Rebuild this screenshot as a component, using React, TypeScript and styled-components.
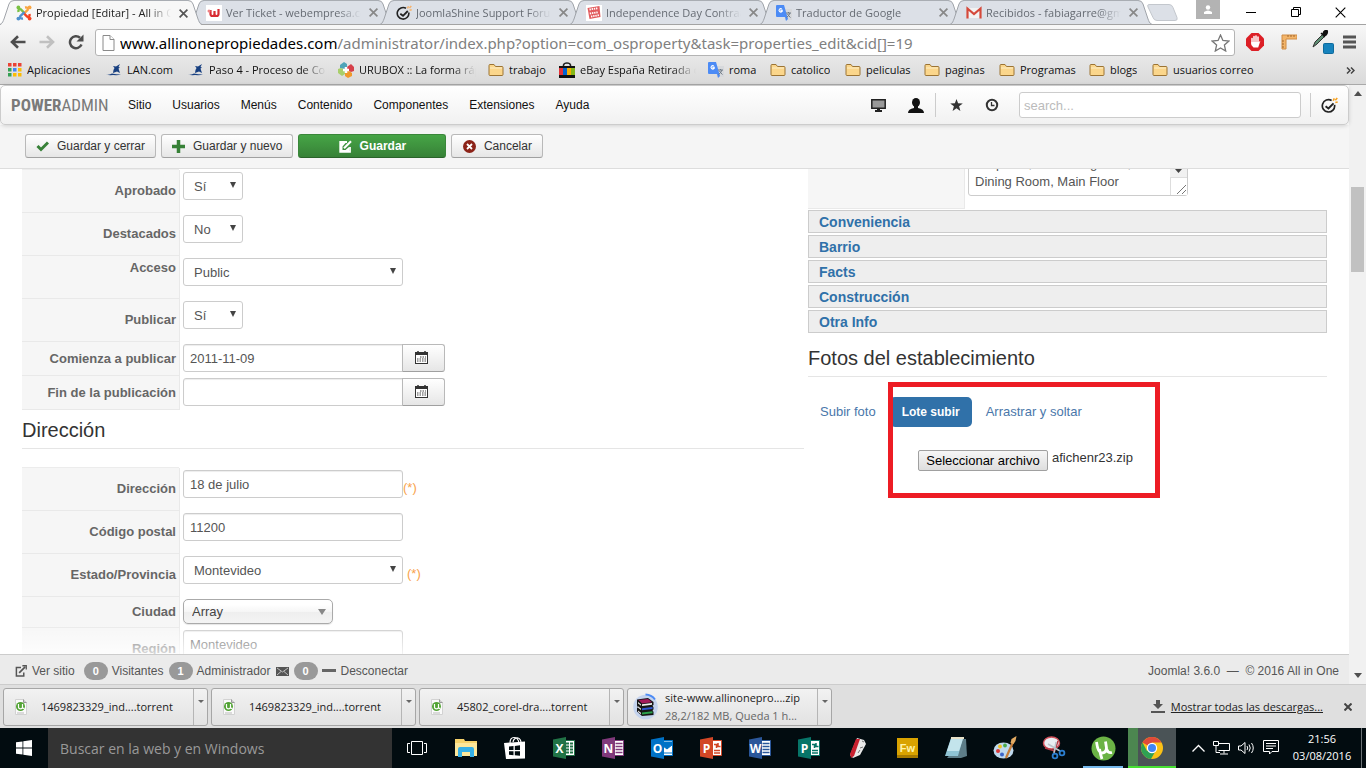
import React from "react";
import styled, { createGlobalStyle, css } from "styled-components";

const uiFont = `"Open Sans", "Noto Sans", sans-serif`;
const pageFont = `"Liberation Sans", Arial, sans-serif`;

const GlobalStyle = createGlobalStyle`
  *, *::before, *::after { box-sizing: border-box; }
  body { margin: 0; font-family: ${pageFont}; font-size: 13px; color: #333; background: #fff; }
  button, input, select, textarea { font-family: inherit; margin: 0; }
  svg { display: block; flex: none; }
`;

const Desktop = styled.div`
  display: flex;
  flex-direction: column;
  height: 100vh;
  min-height: 480px;
  overflow: hidden;
`;

/* ---------- Browser chrome ---------- */

const TabStrip = styled.header`
  flex: none;
  display: flex;
  height: 25px;
  background: linear-gradient(#fff 24px, #a3a3a3 24px);
  font: 11px/24px ${uiFont};
`;

const Tab = styled.div<{ $active?: boolean }>`
  position: relative;
  z-index: ${(p) => (p.$active ? 2 : 1)};
  display: flex;
  flex: 0 1 202px;
  min-width: 0;
  height: 25px;
  color: ${(p) => (p.$active ? "#222" : "#666b73")};
  & + & { margin-left: -12px; }
`;

const TabBody = styled.div<{ $active?: boolean }>`
  display: flex;
  flex: 1;
  align-items: center;
  min-width: 0;
  height: ${(p) => (p.$active ? 25 : 24)}px;
  padding-left: 2px;
  border-top: 1px solid #a9adb3;
  background: ${(p) => (p.$active ? "#f7f7f7" : "#dce0e7")};
`;

const TabTitle = styled.span`
  flex: 1;
  min-width: 0;
  margin-left: 4px;
  overflow: hidden;
  white-space: nowrap;
  mask-image: linear-gradient(90deg, #000 calc(100% - 24px), transparent);
`;

const PlainButton = styled.button`
  display: flex;
  align-items: center;
  justify-content: center;
  padding: 0;
  border: 0;
  background: none;
  color: inherit;
`;

const TabClose = styled(PlainButton)`
  width: 16px;
  height: 16px;
  margin: 0 -3px 0 4px;
`;

const NewTab = styled(PlainButton)`
  align-self: flex-start;
  margin: 4px 0 0 -6px;
`;

const WindowControls = styled.div`
  display: flex;
  margin-left: auto;
  height: 24px;
  padding-right: 3px;
`;

const Profile = styled(PlainButton)`
  width: 24px;
  height: 19px;
  margin-right: 8px;
  background: #b3b3b3;
`;

const WindowButton = styled(PlainButton)`
  width: 45px;
  height: 24px;
  color: #000;
`;

const Toolbars = styled.div`
  flex: none;
  height: 60px;
  border-bottom: 1px solid #a9a9a9;
  background: linear-gradient(#f7f7f7, #dadada);
`;

const NavRow = styled.div`
  display: flex;
  align-items: center;
  height: 33px;
  padding: 0 10px 0 8px;
`;

const NavButton = styled(PlainButton)`
  width: 20px;
  height: 24px;
  margin-right: 9px;
`;

const Omnibox = styled.div`
  display: flex;
  flex: 1;
  align-items: center;
  min-width: 0;
  height: 27px;
  margin: 2px 6px 0 0;
  padding: 0 4px 0 6px;
  border: 1px solid #b4b4b4;
  border-radius: 3px;
  background: #fff;
`;

const Url = styled.div`
  flex: 1;
  min-width: 0;
  margin-left: 5px;
  overflow: hidden;
  white-space: nowrap;
  font: 15px/24px "Noto Sans", sans-serif;
  color: #808080;
  b { font-weight: 400; color: #000; }
`;

const ExtensionButton = styled(PlainButton)`
  width: 28px;
  height: 28px;
  margin-right: 6px;
`;

const BookmarkRow = styled.nav`
  display: flex;
  align-items: center;
  height: 24px;
  padding: 0 11px 0 8px;
  font: 11px/20px ${uiFont};
`;

const Bookmark = styled.a<{ $width: number; $fade?: boolean }>`
  display: flex;
  align-items: center;
  gap: 5px;
  flex: 0 1 ${(p) => p.$width}px;
  min-width: 0;
  padding-right: 12px;
  color: #111;
  text-decoration: none;
  white-space: nowrap;
  overflow: hidden;
  span {
    overflow: hidden;
    ${(p) => p.$fade && css`mask-image: linear-gradient(90deg, #000 calc(100% - 24px), transparent);`}
  }
`;

const More = styled(PlainButton)`
  margin-left: auto;
  color: #444;
`;

/* ---------- Page ---------- */

const Viewport = styled.div`
  display: flex;
  flex: 1;
  min-height: 0;
`;

const Page = styled.div`
  position: relative;
  display: flex;
  flex: 1;
  flex-direction: column;
  min-width: 0;
  background: #fff;
`;

const AdminBar = styled.div`
  position: relative;
  flex: none;
  display: flex;
  align-items: center;
  height: 40px;
  padding: 0 10px;
  border: 1px solid #ccc;
  border-radius: 5px;
  background: linear-gradient(#fff, #f1f1f1);
  box-shadow: 0 1px 4px rgba(0, 0, 0, 0.15);
  z-index: 1;
`;

const Brand = styled.a`
  width: 107px;
  color: #7a7a7a;
  text-decoration: none;
  font: 17px/24px "Liberation Sans Narrow", "Roboto Condensed", ${pageFont};
`;

const AdminMenu = styled.nav`
  display: flex;
  gap: 1px;
  a {
    padding: 0 10px;
    color: #111;
    font-size: 12px;
    line-height: 24px;
    text-decoration: none;
  }
`;

const AdminTools = styled.div`
  display: flex;
  align-items: center;
  gap: 22px;
  margin-left: auto;
`;

const Divider = styled.span<{ $tight?: boolean }>`
  width: 1px;
  height: 24px;
  margin: ${(p) => (p.$tight ? "0 -8px 0 -11px" : "0 -12px 0 0")};
  background: #ccc;
`;

const AdminSearch = styled.input`
  width: 282px;
  height: 26px;
  margin: 0 -13px 0 -2px;
  padding: 2px 4px;
  border: 1px solid #ccc;
  border-radius: 3px;
  background: #fff;
  font-size: 13px;
  &::placeholder { color: #bbb; opacity: 1; }
`;

const ActionBar = styled.div`
  flex: none;
  display: flex;
  gap: 5px;
  height: 44px;
  padding: 9px 25px 0;
  border-bottom: 1px solid #ddd;
  background: #f5f5f5;
`;

const ActionButton = styled.button<{ $primary?: boolean }>`
  display: flex;
  align-items: center;
  justify-content: center;
  gap: 8px;
  min-width: ${(p) => (p.$primary ? 148 : 92)}px;
  height: 24px;
  padding: 0 10px;
  border: 1px solid #b9b9b9;
  border-bottom-color: #a0a0a0;
  border-radius: 3px;
  background: linear-gradient(#fff, #e6e6e6);
  color: #333;
  font-size: 12px;
  line-height: 18px;
  ${(p) =>
    p.$primary &&
    css`
      border-color: #3a873a #3a873a #2a632a;
      background: linear-gradient(#46a546, #378137);
      color: #fff;
      font-weight: 700;
    `}
`;

const Scroller = styled.main`
  flex: 1;
  min-height: 0;
  overflow: hidden;
`;

/* The form is shown part-way down its scroll range. */
const Form = styled.form`
  display: grid;
  grid-template-columns: 782fr 519fr;
  gap: 4px;
  margin-top: -20px;
  padding: 0 22px;
`;

const MainColumn = styled.div`
  padding-top: 20px;
`;

const SideColumn = styled.div`
  min-width: 0;
`;

const FieldTable = styled.div`
  border-top: 1px solid transparent;
  border-image: linear-gradient(90deg, #ececec 158px, transparent 158px) 1;
  border-width: 1px 0 0;
`;

const FieldRow = styled.div<{ $height: number }>`
  display: grid;
  grid-template-columns: 158px 1fr;
  column-gap: 3px;
  height: ${(p) => p.$height}px;
`;

const FieldLabel = styled.label<{ $top?: boolean }>`
  display: flex;
  align-items: ${(p) => (p.$top ? "flex-start" : "center")};
  justify-content: flex-end;
  padding: ${(p) => (p.$top ? "3px" : "0")} 3px 0 0;
  border: solid #e9e9e9;
  border-width: 0 1px 1px 0;
  background: #f6f6f6;
  color: #666;
  font-weight: 700;
  line-height: 18px;
  white-space: nowrap;
`;

const FieldControl = styled.div`
  display: flex;
  align-items: flex-start;
  padding-top: 2px;
`;

const controlBox = css`
  height: 28px;
  border: 1px solid #ccc;
  border-radius: 3px;
  background: #fff;
  color: #555;
  font-size: 13px;
`;

const TextInput = styled.input<{ $joined?: boolean }>`
  ${controlBox}
  width: 220px;
  padding: 4px 6px;
  box-shadow: inset 0 1px 1px rgba(0, 0, 0, 0.075);
  ${(p) => p.$joined && css`border-radius: 3px 0 0 3px;`}
`;

const CalendarButton = styled.button`
  display: flex;
  align-items: center;
  justify-content: center;
  width: 43px;
  height: 28px;
  margin-left: -1px;
  padding: 0 5px 2px 0;
  border: 1px solid #b9b9b9;
  border-bottom-color: #a0a0a0;
  border-radius: 0 3px 3px 0;
  background: linear-gradient(#fff, #e6e6e6);
`;

const SelectWrap = styled.span<{ $width: number }>`
  position: relative;
  width: ${(p) => p.$width}px;
  svg {
    position: absolute;
    right: 7px;
    top: 10px;
    pointer-events: none;
  }
`;

const Select = styled.select`
  ${controlBox}
  appearance: none;
  width: 100%;
  padding: 0 20px 0 10px;
`;

const CitySelect = styled.select`
  appearance: none;
  width: 100%;
  height: 25px;
  padding: 0 24px 0 8px;
  border: 1px solid #aaa;
  border-radius: 5px;
  background: linear-gradient(#fff 20%, #f6f6f6 50%, #eee 52%, #f4f4f4);
  box-shadow: 0 1px 1px rgba(0, 0, 0, 0.1);
  color: #444;
  font-size: 13px;
`;

const Required = styled.span<{ $gap?: boolean }>`
  margin-left: ${(p) => (p.$gap ? 4 : 0)}px;
  color: #f9a24a;
  line-height: 36px;
`;

const SectionTitle = styled.h2`
  margin: 0;
  padding-top: 8px;
  height: 39px;
  border-bottom: 1px solid #e5e5e5;
  color: #333;
  font-size: 20px;
  font-weight: 400;
  line-height: 24px;
`;

const AddressFields = styled.div`
  margin-top: 18px;
`;

const OptionsRow = styled.div`
  display: grid;
  grid-template-columns: 157px 1fr;
  column-gap: 3px;
  height: 60px;
`;

const OptionsLabel = styled.div`
  border: solid #e9e9e9;
  border-width: 0 1px 1px 0;
  background: #f6f6f6;
`;

const TextAreaWrap = styled.div`
  position: relative;
  width: 220px;
  height: 46px;
  margin-top: 1px;
`;

const TextArea = styled.textarea`
  display: block;
  width: 100%;
  height: 100%;
  padding: 4px 20px 0 6px;
  border: 1px solid #ccc;
  border-radius: 3px;
  color: #555;
  font-size: 13px;
  line-height: 18px;
  resize: none;
  overflow: hidden;
`;

const TextAreaScroll = styled.span`
  position: absolute;
  right: 1px;
  top: 1px;
  bottom: 1px;
  display: flex;
  flex-direction: column;
  width: 17px;
  background: #f1f1f1;
  > svg { margin: 18px 0 4px 5px; }
`;

const ResizeCorner = styled.span`
  display: flex;
  flex: 1;
  align-items: flex-end;
  justify-content: flex-end;
  padding: 1px;
  border: solid #ddd;
  border-width: 1px 0 0 1px;
  background: #fff;
`;

const Accordion = styled.div`
  display: flex;
  flex-direction: column;
  gap: 2px;
  padding: 1px 0 5px;
`;

const AccordionHeader = styled.button`
  height: 23px;
  padding: 0 10px;
  border: 1px solid #ccc;
  background: #eee;
  color: #3071a9;
  font-size: 14px;
  font-weight: 700;
  line-height: 20px;
  text-align: left;
`;

const PhotoPanel = styled.div`
  position: relative;
  padding-top: 20px;
`;

const Pills = styled.div`
  display: flex;
  gap: 2px;
`;

const Pill = styled.a<{ $active?: boolean }>`
  padding: 6px 12px;
  border-radius: 5px;
  background: ${(p) => (p.$active ? "#3071a9" : "transparent")};
  color: ${(p) => (p.$active ? "#fff" : "#4a77aa")};
  font-size: ${(p) => (p.$active ? 12 : 13)}px;
  font-weight: ${(p) => (p.$active ? 700 : 400)};
  line-height: 18px;
  text-decoration: none;
`;

const FileRow = styled.div`
  display: flex;
  gap: 4px;
  padding: 23px 0 0 110px;
  line-height: 16px;
`;

const HiddenFile = styled.input`
  position: absolute;
  width: 1px;
  height: 1px;
  opacity: 0;
`;

const FileButton = styled.label`
  width: 130px;
  height: 21px;
  border: 1px solid #a0a0a0;
  border-radius: 2px;
  background: linear-gradient(#f6f6f6, #dedede);
  color: #000;
  line-height: 19px;
  text-align: center;
  white-space: nowrap;
`;

const Highlight = styled.div`
  position: absolute;
  left: 80px;
  top: 5px;
  width: 272px;
  height: 116px;
  border: 5px solid #ed1c24;
  pointer-events: none;
`;

const StatusBar = styled.footer`
  position: relative;
  flex: none;
  display: flex;
  align-items: center;
  height: 30px;
  padding: 3px 10px 0 15px;
  border-top: 1px solid #ccc;
  background: #ebebeb;
  color: #555;
  font-size: 12px;
  white-space: nowrap;
  &::before {
    content: "";
    position: absolute;
    left: 0;
    right: 0;
    bottom: 100%;
    height: 30px;
    margin-bottom: 1px;
    background: linear-gradient(rgba(255, 255, 255, 0), rgba(255, 255, 255, 0.75));
    pointer-events: none;
  }
  a {
    display: flex;
    align-items: center;
    gap: 5px;
    color: inherit;
    text-decoration: none;
  }
`;

const Badge = styled.span`
  width: 24px;
  height: 18px;
  margin: 0 4px 0 5px;
  border-radius: 9px;
  background: #999;
  color: #fff;
  font-size: 11px;
  font-weight: 700;
  line-height: 18px;
  text-align: center;
`;

const Visitors = styled.span`
  display: flex;
  align-items: center;
  margin-left: 4px;
`;

const Copyright = styled.p`
  margin: 0 0 0 auto;
  white-space: pre;
`;

const ScrollTrack = styled.div`
  flex: none;
  display: flex;
  flex-direction: column;
  align-items: center;
  width: 17px;
  padding: 6px 0;
  background: #f1f1f1;
`;

const ScrollThumb = styled.div`
  flex: 85;
  width: 13px;
  background: #c1c1c1;
`;

const ScrollSpace = styled.div<{ $grow: number }>`
  flex: ${(p) => p.$grow};
`;

/* ---------- Downloads ---------- */

const Downloads = styled.section`
  flex: none;
  display: flex;
  align-items: center;
  gap: 3px;
  height: 44px;
  padding: 0 10px 0 3px;
  border-top: 1px solid #ccc;
  background: #dfdfdf;
  color: #222;
  font: 11px/18px ${uiFont};
`;

const DownloadItem = styled.div`
  display: flex;
  flex: 0 1 205px;
  min-width: 0;
  height: 38px;
  border: 1px solid #a6a6a6;
  border-radius: 3px;
  background: linear-gradient(#f2f2f2, #e2e2e2);
`;

const DownloadOpen = styled(PlainButton)<{ $progress?: boolean }>`
  flex: 1;
  justify-content: flex-start;
  min-width: 0;
  gap: ${(p) => (p.$progress ? 7 : 12)}px;
  padding-left: ${(p) => (p.$progress ? 5 : 9)}px;
  overflow: hidden;
  text-align: left;
  white-space: nowrap;
  font: inherit;
  small { display: block; color: #666; font-size: 11px; }
`;

const DownloadMenu = styled(PlainButton)`
  width: 14px;
  padding-bottom: 10px;
  border-left: 1px solid #b5b5b5;
`;

const ShowAll = styled.a`
  display: flex;
  align-items: center;
  gap: 6px;
  margin-left: auto;
  color: #222;
  white-space: nowrap;
`;

const CloseBar = styled(PlainButton)`
  width: 16px;
  margin-left: 14px;
`;

/* ---------- Taskbar ---------- */

const Taskbar = styled.footer`
  flex: none;
  display: flex;
  height: 40px;
  background: #020c10;
  color: #fff;
  font-family: ${uiFont};
`;

const StartButton = styled(PlainButton)`
  flex: none;
  width: 48px;
`;

const TaskSearch = styled.input`
  flex: 0 1 344px;
  min-width: 80px;
  padding: 0 12px;
  border: 0;
  background: #333;
  font-size: 14px;
  &::placeholder { color: #999; opacity: 1; }
`;

const TaskButton = styled(PlainButton)<{ $state?: "open" | "active" }>`
  position: relative;
  flex: 0 1 48px;
  margin-left: 1px;
  ${(p) =>
    p.$state === "active" &&
    css`background: linear-gradient(90deg, #4c8650 10px, #4a5356 10px);`}
  ${(p) =>
    p.$state &&
    css`
      &::after {
        content: "";
        position: absolute;
        left: ${p.$state === "active" ? 0 : 4}px;
        right: ${p.$state === "active" ? 0 : 4}px;
        bottom: 0;
        height: 2px;
        background: ${p.$state === "active" ? "#46e032" : "#76b9ed"};
      }
    `}
`;

const Tray = styled.div`
  display: flex;
  align-items: center;
  gap: 8px;
  margin-left: auto;
`;

const Clock = styled.time`
  width: 62px;
  margin-left: 4px;
  padding-bottom: 2px;
  font-size: 11px;
  line-height: 17px;
  text-align: center;
  white-space: nowrap;
`;

const ShowDesktop = styled.button`
  width: 5px;
  height: 40px;
  padding: 0;
  border: 0;
  border-left: 1px solid #6b7275;
  background: none;
`;

/* ---------- Drawings ---------- */

const Cross = ({ size = 8, color = "#777", width = 2 }: { size?: number; color?: string; width?: number }) => (
  <svg width={size} height={size} viewBox="0 0 8 8" stroke={color} strokeWidth={width}>
    <path d="M.5.5l7 7M7.5.5l-7 7" />
  </svg>
);

const Triangle = ({ w = 6, h = 6, color = "#444", up }: { w?: number; h?: number; color?: string; up?: boolean }) => (
  <svg width={w} height={h} viewBox="0 0 10 10" preserveAspectRatio="none" fill={color}>
    <path d={up ? "M0 10L5 0l5 10z" : "M0 0h10L5 10z"} />
  </svg>
);

const TabEdge = ({ side, active }: { side: "left" | "right"; active?: boolean }) => (
  <svg width="14" height="25" viewBox="0 0 14 25" transform={side === "right" ? "scale(-1 1)" : undefined}>
    <path
      d={active ? "M0 25C3 24 3 22 4 19L9 4Q10 .5 14 .5V25z" : "M0 24C3 23 3 21 4 19L9 4Q10 .5 14 .5V24z"}
      fill={active ? "#f7f7f7" : "#dce0e7"}
    />
    <path d="M0 24.500C3 23 3 21 4 19L9 4Q10 .5 14 .5" fill="none" stroke="#a0a4aa" />
  </svg>
);

const JoomlaIcon = () => (
  <svg width="16" height="16" viewBox="0 0 16 16" fill="none" strokeWidth="2.400">
    <path d="M2.500 7Q2 3.500 4.800 4.300L9 8.500" stroke="#7ac143" />
    <path d="M9 2.500Q12.500 2 11.700 4.800L7.500 9" stroke="#f9a541" />
    <path d="M13.500 9Q14 12.500 11.200 11.700L7 7.500" stroke="#f44321" />
    <path d="M7 13.500Q3.500 14 4.300 11.200L8.500 7" stroke="#5091cd" />
    <circle cx="2.400" cy="2.400" r="1.900" fill="#7ac143" /><circle cx="13.600" cy="2.400" r="1.900" fill="#f9a541" />
    <circle cx="13.600" cy="13.600" r="1.900" fill="#f44321" /><circle cx="2.400" cy="13.600" r="1.900" fill="#5091cd" />
  </svg>
);

const WebempresaIcon = () => (
  <svg width="16" height="16" viewBox="0 0 16 16">
    <rect width="16" height="16" fill="#fff" />
    <path d="M4.500 5v4Q4.500 11 6.500 11 8.500 11 8.500 9V6v3q0 2 2 2t2-2V4" fill="none" stroke="#d82c33" strokeWidth="2.200" />
    <circle cx="3" cy="6" r="1.500" fill="#ef7f82" />
  </svg>
);

const ShineIcon = ({ size = 16, spark = "#f7b26a" }: { size?: number; spark?: string }) => (
  <svg width={size} height={size} viewBox="0 0 16 16" fill="none" strokeWidth="1.600">
    <path d="M10 3.300A5.800 5.800 0 1 0 12.800 7.500" stroke="#222" />
    <path d="M4.300 8.800l2.700 2 4.800-4.800" stroke="#222" strokeWidth="1.800" />
    <path d="M11.500 3.500l1-2.200M13.500 5.200l2.200-.5M13.500 3l1.800-2" stroke={spark} strokeWidth="1.500" />
  </svg>
);

const StampIcon = () => (
  <svg width="16" height="16" viewBox="0 0 16 16">
    <rect width="16" height="16" fill="#fff" />
    <path d="M1.500 3l12-2 1 11-11 2z" fill="#e25b5e" />
    <path d="M3.500 4.500l8.500-1.300M3.800 8.500l8.500-1.300M5 11.500l8-1.300" stroke="#fff" strokeWidth="1.800" strokeDasharray="1.400 .8" />
  </svg>
);

const TranslateIcon = () => (
  <svg width="16" height="16" viewBox="0 0 16 16">
    <path d="M7 4h9v11H9z" fill="#d7d9dc" />
    <path d="M0 1q0-1 1-1h7l4 14-2 2-1-4H1q-1 0-1-1z" fill="#4c8bf5" />
    <path d="M7 5.300H5v1.200h1A1.700 1.700 0 1 1 5.800 4" fill="none" stroke="#fff" strokeWidth="1.100" />
    <path d="M10 8h5M12.500 7v1m1.500 0q-1 3-3.500 4.500M11.500 9q1 2 3 3.500" fill="none" stroke="#6f7a86" />
  </svg>
);

const GmailIcon = () => (
  <svg width="16" height="16" viewBox="0 0 16 16">
    <path d="M1 3h14v10H1z" fill="#f2f2f2" />
    <path d="M1.500 13.500v-10L8 9l6.500-5.500v10" fill="none" stroke="#d5493b" strokeWidth="2.200" />
  </svg>
);

const AppsIcon = () => (
  <svg width="14" height="14" viewBox="0 0 14 14">
    {["#ea4335", "#ea4335", "#ea4335", "#34a053", "#4285f4", "#fbbc05", "#34a053", "#fbbc05", "#fbbc05"].map((c, i) => (
      <rect key={i} x={(i % 3) * 5} y={Math.floor(i / 3) * 5} width="3.500" height="3.500" fill={c} />
    ))}
  </svg>
);

const LanIcon = () => (
  <svg width="16" height="16" viewBox="0 0 16 16" fill="#173f80">
    <path d="M7 4l3 .5L14 2l-1.500 3 1.500.5-1.500 1L14 11l-3-1.500-4 1.500.5-3 1-2zM0 12.500q4 .5 6-1 4 1 9 1-3 1-8 .500Q3 13.500 0 12.500z" />
  </svg>
);

const UruboxIcon = () => (
  <svg width="16" height="16" viewBox="0 0 16 16">
    <path d="M2 3l4-3 3 2v5H6L2 6z" fill="#4fa4b8" /><path d="M9 5l4-3 3 3v4l-3 1-4-2z" fill="#d6404a" />
    <path d="M7 9h4l3 2v3l-4 2-3-2z" fill="#f0992b" /><path d="M0 7l3-1 4 2v4l-3 2-4-3z" fill="#a9cf6b" />
    <path d="M8 5v6M5 8h6" stroke="#fff" strokeWidth="2.500" />
  </svg>
);

const FolderIcon = () => (
  <svg width="16" height="14" viewBox="0 0 16 14">
    <path d="M1 2.500q0-1 1-1h4l1.500 2H14q1 0 1 1v7q0 1-1 1H2q-1 0-1-1z" fill="#fbd68b" stroke="#9c7434" />
    <path d="M2 5h12" stroke="#fdeec7" />
  </svg>
);

const EbayIcon = () => (
  <svg width="16" height="16" viewBox="0 0 16 16">
    <path d="M4.500 5V3Q5 1 8 1t3.500 2v2" fill="none" stroke="#222" strokeWidth="1.500" />
    <path d="M0 4h16v12H0z" fill="#111" />
    <path d="M0 6h4v7H0z" fill="#e53238" /><path d="M4 6h4v7H4z" fill="#0064d2" />
    <path d="M8 6h4v7H8z" fill="#f5af02" /><path d="M12 6h4v7h-4z" fill="#86b817" />
  </svg>
);

const CalendarIcon = () => (
  <svg width="13" height="13" viewBox="0 0 13 13">
    <path d="M0 1h13v12H0z" fill="#333" /><path d="M1 4h11v8H1z" fill="#fff" />
    <path d="M5 6h6M2 8h9M2 10h9" stroke="#444" strokeWidth="1.200" strokeDasharray="1.500 1" />
    <path d="M3 0v2M10 0v2" stroke="#333" strokeWidth="1.500" />
  </svg>
);

const ShareIcon = ({ color = "#fff" }: { color?: string }) => (
  <svg width="12" height="12" viewBox="0 0 13 13" fill="none" stroke={color}>
    <path d="M6.500 2.800H1.500v9h8V8" strokeWidth="1.600" />
    <path d="M4.500 8.500L11 2" strokeWidth="1.800" /><path d="M8 .8h4.200V5" strokeWidth="1.400" />
  </svg>
);

const EditIcon = () => (
  <svg width="13" height="13" viewBox="0 0 13 13" fill="none" stroke="#fff">
    <path d="M8 2H1.200v9.800H11V7" strokeWidth="1.800" />
    <path d="M2 2.500h5L3.500 6.500v3.500h3L10 7v4H2z" fill="#fff" stroke="none" />
    <path d="M5 8.200L12 1.200" strokeWidth="2.200" />
  </svg>
);

const TorrentIcon = () => (
  <svg width="16" height="18" viewBox="0 0 16 18">
    <path d="M2.500 1.500h8l3 3v12h-11z" fill="#fafafa" stroke="#d2d2d2" />
    <path d="M10.500 1.500v3h3" fill="#ccc" stroke="#999" />
    <circle cx="7.500" cy="8.500" r="4.500" fill="#52a334" />
    <path d="M5.500 6v3q0 1.800 2 1.800t2-1.800V6M9.500 9.500q.5 1.300 2 .8" fill="none" stroke="#fff" strokeWidth="1.200" />
    <path d="M4 15h7" stroke="#bbb" />
  </svg>
);

const ZipIcon = () => (
  <svg width="25" height="28" viewBox="0 0 25 28">
    <circle cx="12.500" cy="14" r="12.300" fill="#c4d3ee" />
    <path d="M12.500 1.500a12 12 0 0 1 9.500 5" fill="none" stroke="#4c8bf5" strokeWidth="2" />
    <path d="M4 6.500L15 5l5.500 4v3l-1 .5 1 2v2l-1 .5 1 2v3L9 23l-5-4.500V15l1-.5-1-2z" fill="#151515" />
    <path d="M5.500 7l9.500-1 4 3.200L9 10.500z" fill="#a3195b" />
    <path d="M9 11.300l10-1.200v1.600L9 13z" fill="#eee" /><path d="M9 15.200l10.500-1.200v2L9 17.300z" fill="#2f56d0" />
    <path d="M9 19.500l10.500-1.200v2L9 21.600z" fill="#2ba14c" />
    <path d="M5 9l3 2.300v1.500L5 10.500zM5 13.200l3 2.300V17l-3-2.300zM5 17.400l3 2.300v1.500l-3-2.300z" fill="#ddd" />
  </svg>
);

const OfficeIcon = ({ color, letter }: { color: string; letter: string }) => (
  <svg width="23" height="22" viewBox="0 0 23 22">
    <path d="M11 3.500h10.500v15H11z" fill="#fff" stroke={color} />
    {letter === "X" && <path d="M13 6.500h3m1 0h3M13 9.500h3m1 0h3M13 12.500h3m1 0h3M13 15.500h3m1 0h3" stroke={color} strokeWidth="1.800" />}
    {letter === "O" && <path d="M12 5h9v3l-5 4-4-3zM12 16h9" fill={color} stroke={color} />}
    {(letter === "N" || letter === "W") && <path d="M13.500 6.500h7M13.500 9.500h7M13.500 12.500h7M13.500 15.500h7" stroke={color} strokeWidth="1.400" />}
    {letter === "P" && <path d="M14 13.500h6M14 16h6M14 7.500h2.500V11M18 6v3.500h2.500" fill="none" stroke={color} strokeWidth="1.500" />}
    <path d="M0 2.500L13 0v22L0 19.500z" fill={color} />
    <text x="6.500" y="15.500" fill="#fff" fontFamily="Open Sans" fontWeight="700" fontSize="12" textAnchor="middle">{letter}</text>
  </svg>
);

const ExplorerIcon = () => (
  <svg width="22" height="20" viewBox="0 0 22 20">
    <path d="M0 1h9l1 2h12v15H0z" fill="#f6d26b" /><path d="M0 5h22v13H0z" fill="#fde79a" />
    <path d="M3 19v-8q0-2 2-2h12q2 0 2 2v8h-4v-5H7v5z" fill="#36b0e6" />
  </svg>
);

const StoreIcon = () => (
  <svg width="22" height="24" viewBox="0 0 22 24">
    <path d="M6 7Q6 1.500 10 1.500T15 7M9 6q1-4.500 5-4 3 1 3 5" fill="none" stroke="#fff" strokeWidth="1.200" />
    <path d="M0 7l21-1.500v17L2 23z" fill="#fff" />
    <path d="M5 10.500l4.500-.5v4H5zM10.800 9.900l5.200-.6V14h-5.200zM5 15.200h4.500v4L5 18.800zM10.800 15.200H16v4.600l-5.200-.5z" fill="#020c10" />
  </svg>
);

const CorelIcon = () => (
  <svg width="18" height="22" viewBox="0 0 18 22">
    <path d="M8 1l7 2 2 4-6 11-7 3-3-3z" fill="#e9e9e9" /><path d="M7 2l4 0-6 17-3 2-1-4z" fill="#c8202f" />
    <path d="M13 4l2 1M11 11l3-1M9 16l2-3" stroke="#777" />
  </svg>
);

const FireworksIcon = () => (
  <svg width="21" height="20" viewBox="0 0 21 20">
    <path d="M0 0h21v20H0z" fill="#d9a300" /><path d="M0 17h21v3H0z" fill="#a77b00" />
    <text x="10.500" y="14" fill="#fff3a8" fontFamily="Liberation Sans" fontWeight="700" fontSize="11" textAnchor="middle">Fw</text>
  </svg>
);

const NotepadIcon = () => (
  <svg width="24" height="22" viewBox="0 0 24 22">
    <path d="M19 2h3l1 17-6 2H3z" fill="#5d7d88" /><path d="M7 1h12l-5 18H1z" fill="#8fc4d4" />
    <path d="M7 2h12l-4 12H3z" fill="#c3e4ec" /><path d="M7 0h13v2H7z" fill="#e8e2c8" />
  </svg>
);

const PaintIcon = () => (
  <svg width="24" height="24" viewBox="0 0 24 24">
    <ellipse cx="10.500" cy="14.500" rx="10" ry="8" fill="#bfd9ee" />
    <circle cx="5" cy="15" r="2" fill="#d93a3a" /><circle cx="7" cy="10.500" r="1.900" fill="#f0c020" />
    <circle cx="12" cy="9.500" r="1.900" fill="#49a94a" /><circle cx="9" cy="18.500" r="2" fill="#3c65c9" />
    <path d="M20 6L13 22" stroke="#c47c38" strokeWidth="2.200" /><path d="M23.500 0l-5 3-1 4 3 1 2-3z" fill="#e3ab63" />
  </svg>
);

const SnippingIcon = () => (
  <svg width="24" height="24" viewBox="0 0 24 24" fill="none">
    <ellipse cx="9.500" cy="7" rx="8" ry="6" fill="#e9eef2" stroke="#d2515b" strokeWidth="1.500" />
    <path d="M3 12l10 3M16 5l-4 12" stroke="#b33a45" strokeWidth="1.500" /><path d="M6 8l12 7M14 6l-2 11" stroke="#b9c3ca" strokeWidth="1.500" />
    <circle cx="13" cy="20" r="2.400" stroke="#2b7ed0" strokeWidth="1.800" /><circle cx="20" cy="17" r="2.400" stroke="#2b7ed0" strokeWidth="1.800" />
  </svg>
);

const UTorrentIcon = () => (
  <svg width="25" height="25" viewBox="0 0 25 25" fill="none">
    <circle cx="12.500" cy="12.500" r="12" fill="#6bb345" />
    <path d="M5.500 6Q7 17 11 17t4.500-5L14.500 5.500M15.500 13q1.500 4.500 5.500 3.500M8.500 13q1 6 2.500 10" stroke="#fff" strokeWidth="2.800" />
  </svg>
);

const ChromeIcon = () => (
  <svg width="24" height="24" viewBox="0 0 24 24">
    <circle cx="12" cy="12" r="11" fill="#fbc116" />
    <path d="M12 12L2.500 6.500A11 11 0 0 1 21.500 6.500H12z" fill="#df4a3a" />
    <path d="M12 12l-5 3L2.500 6.500A11 11 0 0 0 11 23l4.500-8z" fill="#2ea153" />
    <circle cx="12" cy="12" r="5.200" fill="#fff" /><circle cx="12" cy="12" r="4" fill="#4285f4" />
  </svg>
);

/* ---------- Data ---------- */

const tabs = [
  { title: "Propiedad [Editar] - All in One", icon: <JoomlaIcon />, active: true },
  { title: "Ver Ticket - webempresa.com", icon: <WebempresaIcon /> },
  { title: "JoomlaShine Support Forum", icon: <ShineIcon /> },
  { title: "Independence Day Contraataque", icon: <StampIcon /> },
  { title: "Traductor de Google", icon: <TranslateIcon /> },
  { title: "Recibidos - fabiagarre@gmail.com", icon: <GmailIcon /> },
];

const bookmarks = [
  { title: "Aplicaciones", icon: <AppsIcon />, width: 98 },
  { title: "LAN.com", icon: <LanIcon />, width: 82 },
  { title: "Paso 4 - Proceso de Compra", icon: <LanIcon />, width: 150, fade: true },
  { title: "URUBOX :: La forma rápida", icon: <UruboxIcon />, width: 150, fade: true },
  { title: "trabajo", icon: <FolderIcon />, width: 71 },
  { title: "eBay España Retirada de", icon: <EbayIcon />, width: 149, fade: true },
  { title: "roma", icon: <TranslateIcon />, width: 62 },
  { title: "catolico", icon: <FolderIcon />, width: 75 },
  { title: "peliculas", icon: <FolderIcon />, width: 79 },
  { title: "paginas", icon: <FolderIcon />, width: 75 },
  { title: "Programas", icon: <FolderIcon />, width: 90 },
  { title: "blogs", icon: <FolderIcon />, width: 63 },
  { title: "usuarios correo", icon: <FolderIcon />, width: 118 },
];

const menu = ["Sitio", "Usuarios", "Menús", "Contenido", "Componentes", "Extensiones", "Ayuda"];
const panels = ["Conveniencia", "Barrio", "Facts", "Construcción", "Otra Info"];
const files = ["1469823329_ind....torrent", "1469823329_ind....torrent", "45802_corel-dra....torrent"];

const taskItems: { name: string; icon: React.ReactNode; state?: "open" | "active" }[] = [
  {
    name: "Vista de tareas",
    icon: (
      <svg width="20" height="14" viewBox="0 0 20 14" fill="none" stroke="#fff">
        <path d="M4.500.5h11v13h-11zM3 2.500H.5v9H3M17 2.500h2.500v9H17" />
      </svg>
    ),
  },
  { name: "Explorador de archivos", icon: <ExplorerIcon /> },
  { name: "Tienda", icon: <StoreIcon /> },
  { name: "Excel", icon: <OfficeIcon color="#217346" letter="X" /> },
  { name: "OneNote", icon: <OfficeIcon color="#80397b" letter="N" /> },
  { name: "Outlook", icon: <OfficeIcon color="#0072c6" letter="O" /> },
  { name: "PowerPoint", icon: <OfficeIcon color="#d24726" letter="P" /> },
  { name: "Word", icon: <OfficeIcon color="#2b579a" letter="W" /> },
  { name: "Publisher", icon: <OfficeIcon color="#077568" letter="P" /> },
  { name: "CorelDRAW", icon: <CorelIcon /> },
  { name: "Fireworks", icon: <FireworksIcon /> },
  { name: "Bloc de notas", icon: <NotepadIcon /> },
  { name: "Paint", icon: <PaintIcon /> },
  { name: "Recortes", icon: <SnippingIcon /> },
  { name: "µTorrent", icon: <UTorrentIcon />, state: "open" },
  { name: "Chrome", icon: <ChromeIcon />, state: "active" },
];

/* ---------- Parts ---------- */

type FieldProps = { id: string; label: string; height?: number; top?: boolean; children: React.ReactNode };

const Field = ({ id, label, height = 43, top, children }: FieldProps) => (
  <FieldRow $height={height}>
    <FieldLabel htmlFor={id} $top={top}>{label}</FieldLabel>
    <FieldControl>{children}</FieldControl>
  </FieldRow>
);

const Dropdown = ({ id, width, value }: { id: string; width: number; value: string }) => (
  <SelectWrap $width={width}>
    <Select id={id} defaultValue={value}><option>{value}</option></Select>
    <Triangle />
  </SelectWrap>
);

const DateInput = ({ id, value }: { id: string; value: string }) => (
  <>
    <TextInput id={id} defaultValue={value} $joined />
    <CalendarButton type="button" aria-label="Calendario"><CalendarIcon /></CalendarButton>
  </>
);

const BrowserChrome = () => (
  <>
    <TabStrip>
      {tabs.map((t) => (
        <Tab key={t.title} $active={t.active}>
          <TabEdge side="left" active={t.active} />
          <TabBody $active={t.active}>
            {t.icon}
            <TabTitle>{t.title}</TabTitle>
            <TabClose aria-label="Cerrar pestaña"><Cross size={9} color={t.active ? "#555" : "#888"} width={1.5} /></TabClose>
          </TabBody>
          <TabEdge side="right" active={t.active} />
        </Tab>
      ))}
      <NewTab aria-label="Nueva pestaña">
        <svg width="33" height="17" viewBox="0 0 33 17">
          <path d="M3 .5h20q3 0 4 3l4 10q1 3-2 3H11q-3 0-4-3L2 3Q1 .5 3 .5z" fill="#dce0e7" stroke="#c3c7cd" />
        </svg>
      </NewTab>
      <WindowControls>
        <Profile aria-label="Perfil">
          <svg width="10" height="10" viewBox="0 0 10 10" fill="#fff"><circle cx="5" cy="2.500" r="2.200" /><path d="M1 9V7q2-1.500 4-1.500T9 7v2z" /></svg>
        </Profile>
        <WindowButton aria-label="Minimizar">
          <svg width="10" height="10" viewBox="0 0 10 10" stroke="#000"><path d="M0 5.500h10" /></svg>
        </WindowButton>
        <WindowButton aria-label="Restaurar">
          <svg width="10" height="10" viewBox="0 0 10 10" fill="none" stroke="#000"><path d="M.5 2.500h7v7h-7zM2.500 2V.5h7v7H8" /></svg>
        </WindowButton>
        <WindowButton aria-label="Cerrar"><Cross size={11} color="#000" width={0.8} /></WindowButton>
      </WindowControls>
    </TabStrip>
    <Toolbars>
      <NavRow>
        <NavButton aria-label="Atrás">
          <svg width="16" height="14" viewBox="0 0 16 14" fill="none" stroke="#4d4d4d" strokeWidth="2.600"><path d="M15.500 7H2M8 1.200L2 7l6 5.800" /></svg>
        </NavButton>
        <NavButton aria-label="Adelante">
          <svg width="16" height="14" viewBox="0 0 16 14" fill="none" stroke="#c0c0c0" strokeWidth="2.600"><path d="M.5 7H14M8 1.200L14 7l-6 5.800" /></svg>
        </NavButton>
        <NavButton aria-label="Recargar">
          <svg width="16" height="16" viewBox="0 0 16 16" fill="none" stroke="#4d4d4d" strokeWidth="2.500">
            <path d="M13.500 10.500A6 6 0 1 1 12 3.700" /><path d="M15.500.5v7h-7z" fill="#4d4d4d" stroke="none" />
          </svg>
        </NavButton>
        <Omnibox>
          <svg width="13" height="16" viewBox="0 0 13 16" fill="#fff" stroke="#8a8a8a"><path d="M1 .5h7l4 4v11H1z" /><path d="M8 .5v4h4" /></svg>
          <Url><b>www.allinonepropiedades.com</b>/administrator/index.php?option=com_osproperty&amp;task=properties_edit&amp;cid[]=19</Url>
          <svg width="19" height="18" viewBox="0 0 19 18" fill="#fff" stroke="#777" strokeWidth="1.300">
            <path d="M9.500 1l2.400 5.500 6 .6-4.500 4 1.300 5.900-5.200-3.100L4.300 17l1.300-5.900-4.500-4 6-.6z" />
          </svg>
        </Omnibox>
        <ExtensionButton aria-label="AdBlock">
          <svg width="18" height="18" viewBox="0 0 18 18">
            <path d="M5.500 0h7L18 5.500v7L12.500 18h-7L0 12.500v-7z" fill="#dc1f26" />
            <path d="M6 5.500v5M8 3.500v6M10 3v6M12 4v7" stroke="#fff" strokeWidth="1.500" strokeLinecap="round" />
            <path d="M5.300 9h7.500l1.600-1.200-2.200 6.700H7.500L5.300 12z" fill="#fff" />
          </svg>
        </ExtensionButton>
        <ExtensionButton aria-label="Page Ruler">
          <svg width="16" height="16" viewBox="0 0 16 16"><path d="M1 1h15v4H5v10H1z" fill="#f3b56a" stroke="#d08c45" /><path d="M7 1v2M10 1v2M13 1v2M1 7h2M1 10h2M1 13h2" stroke="#a0662c" /></svg>
        </ExtensionButton>
        <ExtensionButton aria-label="ColorZilla">
          <svg width="22" height="24" viewBox="0 0 22 24">
            <path d="M1 17l2-5 8-8 2 2-8 8z" fill="#5f8f74" stroke="#333" /><path d="M9 3l4 4M11 4q1-4 4-3.500 1 2-1 4.500l-2 1z" fill="#111" stroke="#111" strokeWidth="1.500" />
            <rect x="11.500" y="13.500" width="10" height="10" rx="1" fill="#1783bd" stroke="#0f6a9c" />
          </svg>
        </ExtensionButton>
        <PlainButton aria-label="Menú">
          <svg width="13" height="14" viewBox="0 0 13 14" stroke="#555" strokeWidth="3"><path d="M0 2h13M0 7h13M0 12h13" /></svg>
        </PlainButton>
      </NavRow>
      <BookmarkRow>
        {bookmarks.map((b) => (
          <Bookmark key={b.title} href="#" $width={b.width} $fade={b.fade}>{b.icon}<span>{b.title}</span></Bookmark>
        ))}
        <More aria-label="Más marcadores">
          <svg width="9" height="7" viewBox="0 0 9 7" fill="none" stroke="#444" strokeWidth="1.500"><path d="M1 .5l3 3-3 3M5 .5l3 3-3 3" /></svg>
        </More>
      </BookmarkRow>
    </Toolbars>
  </>
);

const AdminHeader = () => (
  <>
    <AdminBar>
      <Brand href="#"><b>POWER</b>ADMIN</Brand>
      <AdminMenu>{menu.map((m) => <a key={m} href="#">{m}</a>)}</AdminMenu>
      <AdminTools>
        <PlainButton aria-label="Vista previa">
          <svg width="15" height="13" viewBox="0 0 15 13"><path d="M.8.8h13.400v8.400H.8z" fill="#999" stroke="#222" strokeWidth="1.500" /><path d="M6 9h3v2h2v2H4v-2h2z" fill="#222" /></svg>
        </PlainButton>
        <PlainButton aria-label="Usuario">
          <svg width="16" height="15" viewBox="0 0 16 15" fill="#111"><ellipse cx="8" cy="4.500" rx="4" ry="4.500" /><path d="M6 7h4v3q6 1 6 5H0q0-4 6-5z" /></svg>
        </PlainButton>
        <Divider $tight />
        <PlainButton aria-label="Favoritos">
          <svg width="13" height="12" viewBox="0 0 13 12" fill="#333"><path d="M6.500 0l1.600 4.200 4.700.2L9.100 7.300l1.300 4.600-3.900-2.600-3.900 2.600 1.300-4.600L.2 4.400l4.700-.2z" /></svg>
        </PlainButton>
        <PlainButton aria-label="Historial">
          <svg width="14" height="14" viewBox="0 0 14 14" fill="none" stroke="#333"><circle cx="7" cy="7" r="5.200" strokeWidth="2" /><path d="M6.500 4v3.500h3" strokeWidth="1.300" /></svg>
        </PlainButton>
        <AdminSearch aria-label="search" placeholder="search..." />
        <Divider />
        <PlainButton aria-label="JoomlaShine"><ShineIcon size={17} spark="#f6a01e" /></PlainButton>
      </AdminTools>
    </AdminBar>
    <ActionBar>
      <ActionButton>
        <svg width="13" height="11" viewBox="0 0 13 11" fill="none" stroke="#378137" strokeWidth="3"><path d="M1.500 5l3.500 3.500L12 1.500" /></svg>
        Guardar y cerrar
      </ActionButton>
      <ActionButton>
        <svg width="13" height="13" viewBox="0 0 13 13" stroke="#378137" strokeWidth="3.500"><path d="M6.500 0v13M0 6.500h13" /></svg>
        Guardar y nuevo
      </ActionButton>
      <ActionButton $primary><EditIcon />Guardar</ActionButton>
      <ActionButton>
        <svg width="13" height="13" viewBox="0 0 13 13"><circle cx="6.500" cy="6.500" r="6.500" fill="#8c2318" /><path d="M4 4l5 5M9 4L4 9" stroke="#fff" strokeWidth="1.800" /></svg>
        Cancelar
      </ActionButton>
    </ActionBar>
  </>
);

const PropertyForm = () => (
  <Form>
    <MainColumn>
      <FieldTable>
        <Field id="approved" label="Aprobado"><Dropdown id="approved" width={60} value="Sí" /></Field>
        <Field id="featured" label="Destacados"><Dropdown id="featured" width={60} value="No" /></Field>
        <Field id="access" label="Acceso" top><Dropdown id="access" width={220} value="Public" /></Field>
        <Field id="published" label="Publicar"><Dropdown id="published" width={60} value="Sí" /></Field>
        <Field id="start" label="Comienza a publicar" height={34}><DateInput id="start" value="2011-11-09" /></Field>
        <Field id="end" label="Fin de la publicación" height={34}><DateInput id="end" value="" /></Field>
      </FieldTable>
      <SectionTitle>Dirección</SectionTitle>
      <AddressFields>
        <FieldTable>
          <Field id="address" label="Dirección"><TextInput id="address" defaultValue="18 de julio" /><Required>(*)</Required></Field>
          <Field id="postcode" label="Código postal"><TextInput id="postcode" defaultValue="11200" /></Field>
          <Field id="state" label="Estado/Provincia"><Dropdown id="state" width={220} value="Montevideo" /><Required $gap>(*)</Required></Field>
          <Field id="city" label="Ciudad" height={31}>
            <SelectWrap $width={150}>
              <CitySelect id="city" defaultValue="Array"><option>Array</option></CitySelect>
              <Triangle w={8} h={6} color="#888" />
            </SelectWrap>
          </Field>
          <Field id="region" label="Región"><TextInput id="region" defaultValue="Montevideo" /></Field>
        </FieldTable>
      </AddressFields>
    </MainColumn>
    <SideColumn>
      <OptionsRow>
        <OptionsLabel />
        <TextAreaWrap>
          <TextArea aria-label="Opciones" defaultValue={"Carpeted, Den/Living Area,\nDining Room, Main Floor\nBathroom, Family Room"} />
          <TextAreaScroll>
            <Triangle w={7} h={4} />
            <ResizeCorner><svg width="9" height="9" viewBox="0 0 9 9" stroke="#777"><path d="M0 9l9-9M5 9l4-4" /></svg></ResizeCorner>
          </TextAreaScroll>
        </TextAreaWrap>
      </OptionsRow>
      <Accordion>
        {panels.map((p) => <AccordionHeader key={p} type="button">{p}</AccordionHeader>)}
      </Accordion>
      <SectionTitle>Fotos del establecimiento</SectionTitle>
      <PhotoPanel>
        <Pills>
          <Pill href="#">Subir foto</Pill>
          <Pill href="#" $active>Lote subir</Pill>
          <Pill href="#">Arrastrar y soltar</Pill>
        </Pills>
        <FileRow>
          <HiddenFile id="zip" type="file" />
          <FileButton htmlFor="zip">Seleccionar archivo</FileButton>
          <span>afichenr23.zip</span>
        </FileRow>
        <Highlight />
      </PhotoPanel>
    </SideColumn>
  </Form>
);

const PageStatus = () => (
  <StatusBar>
    <a href="#"><ShareIcon color="#555" />Ver sitio</a>
    <Visitors><Badge>0</Badge>Visitantes</Visitors>
    <Badge>1</Badge>
    <a href="#">
      Administrador
      <svg width="13" height="9" viewBox="0 0 13 9"><path d="M0 0h13v9H0z" fill="#555" /><path d="M1 1l5.500 4L12 1M1 8l4-3.500M12 8L8 4.500" fill="none" stroke="#ccc" strokeWidth=".9" /></svg>
    </a>
    <Badge>0</Badge>
    <a href="#">
      <svg width="14" height="4" viewBox="0 0 14 4"><path d="M0 0h14v3H0z" fill="#666" /></svg>
      Desconectar
    </a>
    <Copyright>{"Joomla! 3.6.0  —  © 2016 All in One"}</Copyright>
  </StatusBar>
);

const DownloadBar = () => (
  <Downloads>
    {files.map((f, i) => (
      <DownloadItem key={i}>
        <DownloadOpen><TorrentIcon />{f}</DownloadOpen>
        <DownloadMenu aria-label="Opciones de descarga"><Triangle w={6} h={3} color="#666" /></DownloadMenu>
      </DownloadItem>
    ))}
    <DownloadItem>
      <DownloadOpen $progress>
        <ZipIcon />
        <span>site-www.allinonepro....zip<small>28,2/182 MB, Queda 1 h...</small></span>
      </DownloadOpen>
      <DownloadMenu aria-label="Opciones de descarga"><Triangle w={6} h={3} color="#666" /></DownloadMenu>
    </DownloadItem>
    <ShowAll href="#">
      <svg width="14" height="13" viewBox="0 0 14 13" fill="#555"><path d="M5 0h4v4h3L7 9 2 4h3zM0 11h14v2H0z" /></svg>
      Mostrar todas las descargas...
    </ShowAll>
    <CloseBar aria-label="Cerrar"><Cross size={8} color="#444" width={2} /></CloseBar>
  </Downloads>
);

const WindowsTaskbar = () => (
  <Taskbar>
    <StartButton aria-label="Inicio">
      <svg width="16" height="16" viewBox="0 0 16 16" fill="#fff"><path d="M0 2.300l6.500-.9v6.200H0zM7.300 1.300L16 0v7.600H7.300zM0 8.400h6.500v6.200L0 13.700zM7.300 8.400H16V16l-8.700-1.300z" /></svg>
    </StartButton>
    <TaskSearch aria-label="Buscar" placeholder="Buscar en la web y en Windows" />
    {taskItems.map((t) => (
      <TaskButton key={t.name} aria-label={t.name} $state={t.state}>{t.icon}</TaskButton>
    ))}
    <Tray>
      <svg width="13" height="8" viewBox="0 0 13 8" fill="none" stroke="#fff" strokeWidth="1.300"><path d="M.5 7.500l6-6 6 6" /></svg>
      <svg width="17" height="14" viewBox="0 0 17 14" fill="none" stroke="#fff"><path d="M5.500 2.500h11v7h-11M.5.5h5v4h-5zM3 4.500v7h4M11 9.500v3M7 13h8" /></svg>
      <svg width="17" height="14" viewBox="0 0 17 14" fill="none" stroke="#fff"><path d="M.5 5v4h2.500l4 3.500v-11L3 5zM9 5q1.500 2 0 4M11 3.500q2.500 3.500 0 7M13.500 2q3.500 5 0 10" /></svg>
      <svg width="16" height="16" viewBox="0 0 16 16" fill="none" stroke="#fff"><path d="M.5.5h15v11H9L6.500 14v-2.500h-6zM3 3.500h10M3 6h10M3 8.500h7" /></svg>
      <Clock>21:56<br />03/08/2016</Clock>
      <ShowDesktop aria-label="Mostrar escritorio" />
    </Tray>
  </Taskbar>
);

export default function App() {
  return (
    <Desktop>
      <GlobalStyle />
      <BrowserChrome />
      <Viewport>
        <Page>
          <AdminHeader />
          <Scroller><PropertyForm /></Scroller>
          <PageStatus />
        </Page>
        <ScrollTrack>
          <Triangle w={8} h={5} color="#505050" up />
          <ScrollSpace $grow={91} />
          <ScrollThumb />
          <ScrollSpace $grow={400} />
          <Triangle w={8} h={5} color="#505050" />
        </ScrollTrack>
      </Viewport>
      <DownloadBar />
      <WindowsTaskbar />
    </Desktop>
  );
}
